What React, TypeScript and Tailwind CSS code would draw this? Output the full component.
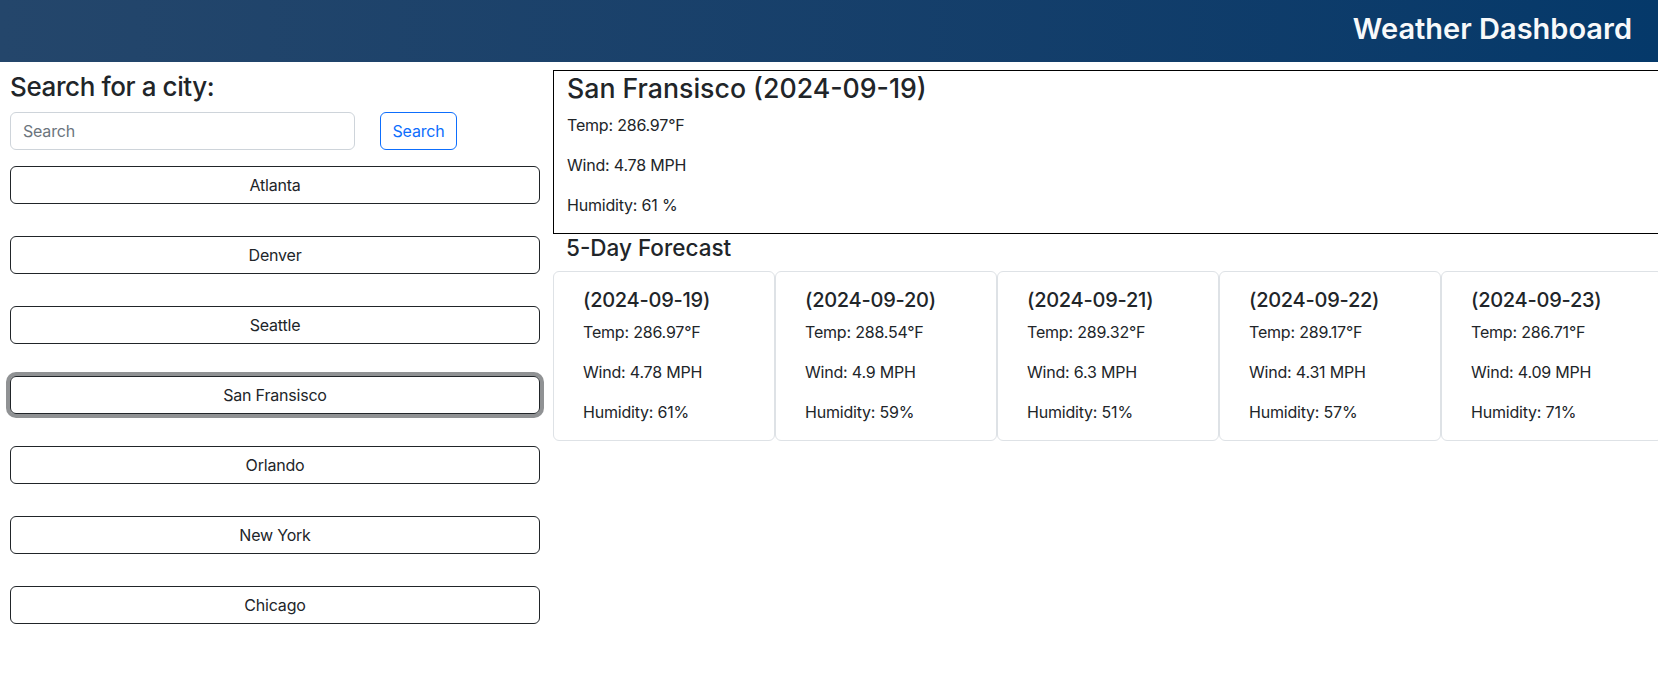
import React from 'react';

const cities = ['Atlanta', 'Denver', 'Seattle', 'San Fransisco', 'Orlando', 'New York', 'Chicago'];

const forecast = [
  { date: '2024-09-19', temp: '286.97', wind: '4.78', humidity: '61' },
  { date: '2024-09-20', temp: '288.54', wind: '4.9', humidity: '59' },
  { date: '2024-09-21', temp: '289.32', wind: '6.3', humidity: '51' },
  { date: '2024-09-22', temp: '289.17', wind: '4.31', humidity: '57' },
  { date: '2024-09-23', temp: '286.71', wind: '4.09', humidity: '71' },
];

export default function App() {
  const selected = 'San Fransisco';

  return (
    <div className="min-h-screen w-full overflow-hidden bg-white font-['Inter','Liberation_Sans',sans-serif] text-[16px] tracking-[-0.2px] text-[#212529]">
      {/* Header */}
      <header className="flex h-[62px] items-center justify-end bg-linear-to-r from-[#24466b] to-[#05396a] pb-[4px] pr-[26px]">
        <h1 className="text-[29px] font-semibold leading-[1.2] tracking-normal text-[#f8f9fa]">Weather Dashboard</h1>
      </header>

      <div className="flex gap-[13px] pl-[10px] pt-2">
        {/* Search column */}
        <aside className="w-[530px] shrink-0">
          <h3 className="mb-2 text-[26px] font-medium leading-[34px] tracking-[-0.4px]">Search for a city:</h3>
          <div className="flex gap-[25px]">
            <input
              type="text"
              placeholder="Search"
              className="h-[38px] w-[345px] rounded-md border border-[#ced4da] px-3 text-[16px] placeholder:text-[#6c757d] focus:outline-none"
            />
            <button className="h-[38px] w-[77px] rounded-md border border-[#0d6efd] text-[16px] text-[#0d6efd]">
              Search
            </button>
          </div>
          <div className="mt-4 flex flex-col gap-8">
            {cities.map((city) => (
              <button
                key={city}
                className={
                  city === selected
                    ? 'h-[38px] w-full rounded-md border border-[#212529] text-[16px] ring-4 ring-[#909294]'
                    : 'h-[38px] w-full rounded-md border border-[#212529] text-[16px]'
                }
              >
                {city}
              </button>
            ))}
          </div>
        </aside>

        {/* Weather column */}
        <main className="w-[1110px] shrink-0">
          <section className="border border-black px-[13px] pt-px">
            <h3 className="mb-2 text-[26.7px] font-medium leading-[33px] tracking-normal">San Fransisco (2024-09-19)</h3>
            <p className="mb-4 leading-6">Temp: 286.97°F</p>
            <p className="mb-4 leading-6">Wind: 4.78 MPH</p>
            <p className="mb-4 leading-6">Humidity: 61 %</p>
          </section>

          <h4 className="mb-2 pl-[13px] text-[22.5px] font-medium leading-[28.8px] tracking-normal">5-Day Forecast</h4>
          <div className="grid grid-cols-5">
            {forecast.map((day) => (
              <div key={day.date} className="rounded-md border border-[#dee2e6] pl-[29px] pt-4">
                <h5 className="mb-2 text-[20px] font-medium leading-6 tracking-[-0.25px]">({day.date})</h5>
                <p className="mb-4 leading-6">Temp: {day.temp}°F</p>
                <p className="mb-4 leading-6">Wind: {day.wind} MPH</p>
                <p className="mb-4 leading-6">Humidity: {day.humidity}%</p>
              </div>
            ))}
          </div>
        </main>
      </div>
    </div>
  );
}
